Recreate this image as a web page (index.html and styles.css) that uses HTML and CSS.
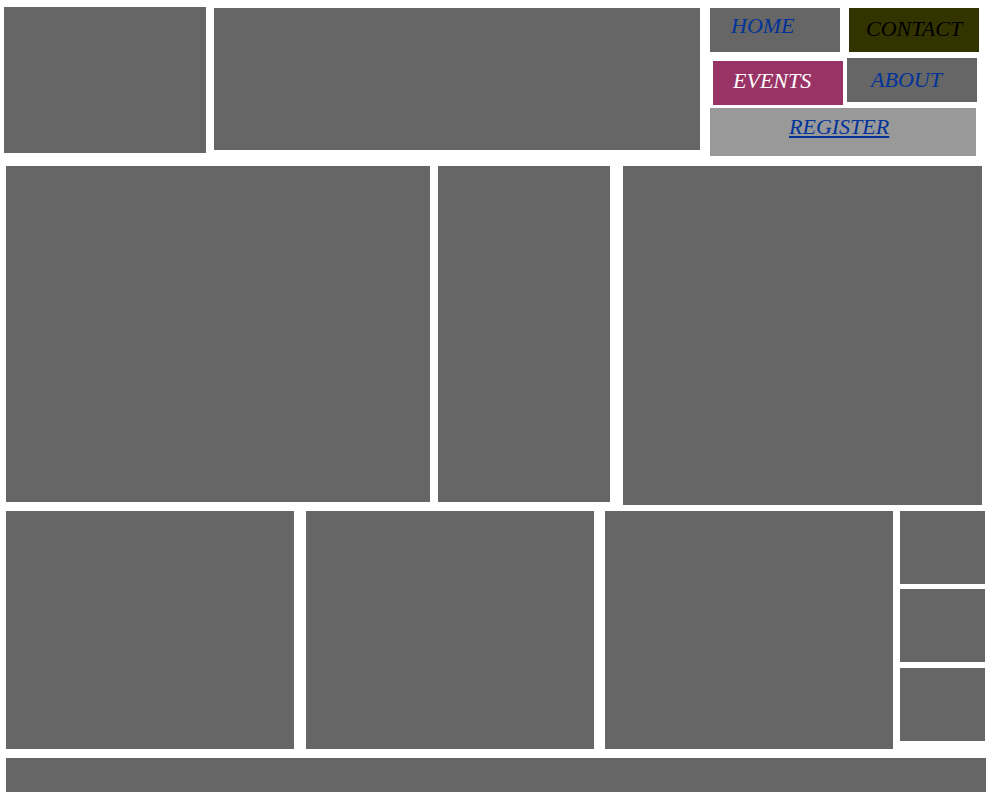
FILE: index.html
```html
<!DOCTYPE html>
<html lang="en">
<head>
    <meta charset="UTF-8">
    <meta name="viewport" content="width=device-width, initial-scale=1.0">
    <title>Blocks</title>
    <link rel="stylesheet" href="styles.css">
</head>
<body>
    <div class="header">
        <div class="block logo"></div>
        <div class="block banner"></div>
        <nav class="nav">
            <a href="#" class="nav-link home">HOME</a>
            <a href="#" class="nav-link contact">CONTACT</a>
            <a href="#" class="nav-link events">EVENTS</a>
            <a href="#" class="nav-link about">ABOUT</a>
            <a href="#" class="nav-link register">REGISTER</a>
        </nav>
    </div>

    <div class="row-main">
        <div class="block main-a"></div>
        <div class="block main-b"></div>
        <div class="block main-c"></div>
    </div>

    <div class="row-cards">
        <div class="block card card-first"></div>
        <div class="block card card-second"></div>
        <div class="block card card-third"></div>
        <div class="side-stack">
            <div class="block mini"></div>
            <div class="block mini mini-2"></div>
            <div class="block mini mini-3"></div>
        </div>
    </div>

    <div class="block footer"></div>
</body>
</html>
```

FILE: styles.css
```css
body {
    margin: 0;
    padding: 0;
    background: white;
    font-family: "Liberation Serif", "Times New Roman", serif;
}
.block {
    background-color: #666666;
    flex: none;
}
.header {
    display: flex;
    align-items: flex-start;
    height: 156px;
}
.logo {
    margin: 7px 0 0 4px;
    width: 202px;
    height: 146px;
}
.banner {
    margin: 8px 0 0 8px;
    width: 486px;
    height: 142px;
}
.nav {
    margin-left: 10px;
    width: 280px;
    display: flex;
    flex-wrap: wrap;
    align-items: flex-start;
    align-content: flex-start;
}
.nav-link {
    display: block;
    box-sizing: border-box;
    width: 130px;
    height: 44px;
    font-size: 22px;
    font-style: italic;
    line-height: 22px;
    text-decoration: none;
    color: #003399;
    background-color: #666666;
    white-space: nowrap;
}
.home {
    margin-top: 8px;
    padding: 7px 0 0 21px;
}
.contact {
    margin: 8px 0 0 9px;
    padding: 10px 0 0 17px;
    background-color: #333300;
    color: black;
}
.events {
    margin: 9px 0 0 3px;
    padding: 9px 0 0 20px;
    background-color: #993366;
    color: white;
}
.about {
    margin: 6px 0 0 4px;
    padding: 11px 0 0 24px;
}
.register {
    margin-top: 3px;
    width: 266px;
    height: 48px;
    padding: 8px 0 0 79px;
    background-color: #999999;
    text-decoration: underline;
}
.row-main {
    display: flex;
    align-items: flex-start;
    margin-top: 10px;
}
.main-a {
    margin-left: 6px;
    width: 424px;
    height: 336px;
}
.main-b {
    margin-left: 8px;
    width: 172px;
    height: 336px;
}
.main-c {
    margin-left: 13px;
    width: 359px;
    height: 339px;
}
.row-cards {
    display: flex;
    align-items: flex-start;
    margin-top: 6px;
}
.card {
    width: 288px;
    height: 238px;
}
.card-first {
    margin-left: 6px;
}
.card-second {
    margin-left: 12px;
}
.card-third {
    margin-left: 11px;
}
.side-stack {
    margin-left: 7px;
    display: flex;
    flex-direction: column;
}
.mini {
    width: 85px;
    height: 73px;
}
.mini-2 {
    margin-top: 5px;
}
.mini-3 {
    margin-top: 6px;
}
.footer {
    margin: 9px 0 0 6px;
    width: 980px;
    height: 34px;
}
```
